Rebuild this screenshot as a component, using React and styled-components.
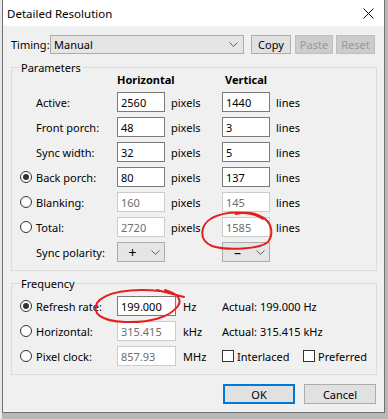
import React from "react";
import styled, { createGlobalStyle } from "styled-components";

const GlobalStyle = createGlobalStyle`
  html, body { margin: 0; padding: 0; }
  body {
    background: #c4c4c4;
    font-family: "Segoe UI", "Noto Sans", sans-serif;
    font-size: 11px;
    color: #000;
  }
`;

const Page = styled.div`
  width: 388px;
  height: 419px;
  overflow: hidden;
  background: linear-gradient(to right, #e8e8e8 0 2px, #b8b8b8 2px);
`;

const Dialog = styled.div`
  position: relative;
  margin-left: 2px;
  width: 383px;
  height: 413px;
  box-sizing: border-box;
  border: 1px solid #707070;
  border-top: none;
  background: #f0f0f0;
  display: flex;
  flex-direction: column;
`;

const TitleBar = styled.div`
  height: 26px;
  background: #fff;
  display: flex;
  align-items: center;
  justify-content: space-between;
  padding: 0 10px 0 4px;
  font-size: 11.5px;
`;

const Body = styled.div`
  padding: 9px 7px 0 8px;
  display: flex;
  flex-direction: column;
`;

const TimingRow = styled.div`
  display: flex;
  align-items: center;
  height: 19px;
`;

const TimingLabel = styled.span`
  width: 39px;
`;

const Select = styled.div`
  width: ${p => p.$w || 194}px;
  height: ${p => p.$h || 19}px;
  box-sizing: border-box;
  border: 1px solid #acacac;
  background: #e5e5e5;
  display: flex;
  align-items: center;
  justify-content: ${p => (p.$center ? "center" : "space-between")};
  padding: 0 ${p => (p.$center ? 0 : 5)}px 0 ${p => (p.$center ? 0 : 3)}px;
  position: relative;
`;

const SelectValue = styled.span`
  flex: ${p => (p.$center ? "1" : "none")};
  text-align: center;
  font-size: ${p => (p.$big ? 14 : 11)}px;
`;

const ChevronBox = styled.span`
  display: flex;
  width: ${p => (p.$w ? p.$w + "px" : "auto")};
  justify-content: center;
`;

const Button = styled.button`
  font: inherit;
  width: ${p => p.$w}px;
  height: ${p => p.$h || 19}px;
  margin-left: ${p => p.$ml || 0}px;
  box-sizing: border-box;
  padding: 0;
  border: ${p => (p.$default ? "2px solid #0078d7" : p.$disabled ? "1px solid #bfbfbf" : "1px solid #adadad")};
  background: ${p => (p.$disabled ? "#cccccc" : "#e1e1e1")};
  color: ${p => (p.$disabled ? "#9a9a9a" : "#000")};
`;

const Group = styled.div`
  position: relative;
  margin-top: ${p => p.$mt}px;
  border: 1px solid #dcdcdc;
  padding: ${p => p.$pt}px 0 8px 8px;
`;

const GroupLabel = styled.span`
  position: absolute;
  top: -8px;
  left: 8px;
  padding: 0 1px;
  background: #f0f0f0;
  line-height: 15px;
`;

const Grid = styled.div`
  display: grid;
  grid-template-columns: ${p => p.$cols};
  grid-template-rows: ${p => p.$rows};
  row-gap: 5px;
  align-items: center;
`;

const Header = styled.span`
  font-weight: bold;
  text-align: center;
  grid-column: ${p => p.$col};
  line-height: 14px;
`;

const Radio = styled.span`
  grid-column: 1;
  width: 12px;
  height: 12px;
  box-sizing: border-box;
  border: 1px solid #333;
  border-radius: 50%;
  background: #fff;
  display: flex;
  align-items: center;
  justify-content: center;
  &::after {
    content: "";
    width: 6px;
    height: 6px;
    border-radius: 50%;
    background: ${p => (p.$checked ? "#333" : "transparent")};
  }
`;

const Label = styled.span`
  grid-column: 2;
`;

const Input = styled.div`
  height: 20px;
  box-sizing: border-box;
  border: 1px solid ${p => (p.$disabled ? "#cccccc" : "#7a7a7a")};
  background: #fff;
  color: ${p => (p.$disabled ? "#6d6d6d" : "#000")};
  padding-left: 3px;
  display: flex;
  align-items: center;
`;

const Unit = styled.span`
  padding-left: ${p => p.$pl || 6}px;
`;

const Actual = styled.span``;

const CheckRow = styled.div`
  grid-column: 5 / 7;
  display: flex;
  align-items: center;
`;

const CheckItem = styled.label`
  display: flex;
  align-items: center;
  gap: 3px;
  width: ${p => p.$w || "auto"};
`;

const Checkbox = styled.span`
  width: 12px;
  height: 12px;
  box-sizing: border-box;
  border: 1px solid #333;
  background: #fff;
`;

const Footer = styled.div`
  margin-top: 9px;
  display: flex;
  justify-content: flex-end;
  gap: 9px;
  padding-right: 1px;
`;

const Overlay = styled.svg`
  position: absolute;
  left: -3px;
  top: 0;
  pointer-events: none;
`;

const Chevron = () => (
  <svg width="9" height="5" viewBox="0 0 9 5">
    <polyline points="0.5,0.5 4.5,4.3 8.5,0.5" fill="none" stroke="#606060" strokeWidth="1" />
  </svg>
);

const CloseIcon = () => (
  <svg width="11" height="11" viewBox="0 0 11 11">
    <path d="M0.5 0.5 L10.5 10.5 M10.5 0.5 L0.5 10.5" stroke="#111" strokeWidth="1" />
  </svg>
);

const params = [
  { label: "Active:", h: "2560", v: "1440" },
  { label: "Front porch:", h: "48", v: "3" },
  { label: "Sync width:", h: "32", v: "5" },
  { label: "Back porch:", h: "80", v: "137", radio: true, checked: true },
  { label: "Blanking:", h: "160", v: "145", radio: true, disabled: true },
  { label: "Total:", h: "2720", v: "1585", radio: true, disabled: true },
];

const freq = [
  { label: "Refresh rate:", value: "199.000", unit: "Hz", actual: "Actual: 199.000 Hz", checked: true },
  { label: "Horizontal:", value: "315.415", unit: "kHz", actual: "Actual: 315.415 kHz", disabled: true },
  { label: "Pixel clock:", value: "857.93", unit: "MHz", disabled: true },
];

export default function App() {
  return (
    <Page>
      <GlobalStyle />
      <Dialog>
        <TitleBar>
          <span>Detailed Resolution</span>
          <CloseIcon />
        </TitleBar>
        <Body>
          <TimingRow>
            <TimingLabel>Timing:</TimingLabel>
            <Select>
              <SelectValue>Manual</SelectValue>
              <Chevron />
            </Select>
            <Button $w={40} $ml={7}>Copy</Button>
            <Button $w={38} $ml={4} $disabled>Paste</Button>
            <Button $w={39} $ml={3} $disabled>Reset</Button>
          </TimingRow>

          <Group $mt={13} $pt={5}>
            <GroupLabel>Parameters</GroupLabel>
            <Grid $cols="16px 81px 48px 57px 48px 1fr" $rows="14px repeat(7, 20px)">
              <Header $col={3}>Horizontal</Header>
              <Header $col={5}>Vertical</Header>
              {params.map(p => (
                <React.Fragment key={p.label}>
                  {p.radio && <Radio $checked={p.checked} />}
                  <Label>{p.label}</Label>
                  <Input $disabled={p.disabled}>{p.h}</Input>
                  <Unit>pixels</Unit>
                  <Input $disabled={p.disabled}>{p.v}</Input>
                  <Unit>lines</Unit>
                </React.Fragment>
              ))}
              <Label>Sync polarity:</Label>
              <Select $w={48} $h={20} $center>
                <SelectValue $center $big>+</SelectValue>
                <ChevronBox $w={17}><Chevron /></ChevronBox>
              </Select>
              <span />
              <Select $w={48} $h={20} $center>
                <SelectValue $center $big>–</SelectValue>
                <ChevronBox $w={17}><Chevron /></ChevronBox>
              </Select>
            </Grid>
          </Group>

          <Group $mt={12} $pt={12}>
            <GroupLabel>Frequency</GroupLabel>
            <Grid $cols="16px 81px 59px 46px 81px 1fr" $rows="repeat(3, 20px)">
              {freq.map(f => (
                <React.Fragment key={f.label}>
                  <Radio $checked={f.checked} />
                  <Label>{f.label}</Label>
                  <Input $disabled={f.disabled}>{f.value}</Input>
                  <Unit $pl={7}>{f.unit}</Unit>
                  {f.actual ? (
                    <Actual style={{ gridColumn: "5 / 7" }}>{f.actual}</Actual>
                  ) : (
                    <CheckRow>
                      <CheckItem $w="81px">
                        <Checkbox />
                        Interlaced
                      </CheckItem>
                      <CheckItem>
                        <Checkbox />
                        Preferred
                      </CheckItem>
                    </CheckRow>
                  )}
                </React.Fragment>
              ))}
            </Grid>
          </Group>

          <Footer>
            <Button $w={72} $h={20} $default>OK</Button>
            <Button $w={72} $h={20}>Cancel</Button>
          </Footer>
        </Body>

        <Overlay width="388" height="413" viewBox="0 0 388 413">
          <path
            d="M 263 219 C 250 210, 225 211, 212 218 C 200 225, 198 240, 212 246 C 228 251, 260 249, 268 242 C 274 234, 272 222, 262 217 C 255 213, 245 212, 236 214"
            fill="none" stroke="#e3201c" strokeWidth="2" strokeLinecap="round"
          />
          <path
            d="M 160 291 C 130 288, 105 292, 97 303 C 92 313, 100 321, 125 322 C 150 323, 170 317, 178 306 C 183 298, 175 293, 165 290 M 157 290 L 184 297"
            fill="none" stroke="#e3201c" strokeWidth="2" strokeLinecap="round"
          />
        </Overlay>
      </Dialog>
    </Page>
  );
}
